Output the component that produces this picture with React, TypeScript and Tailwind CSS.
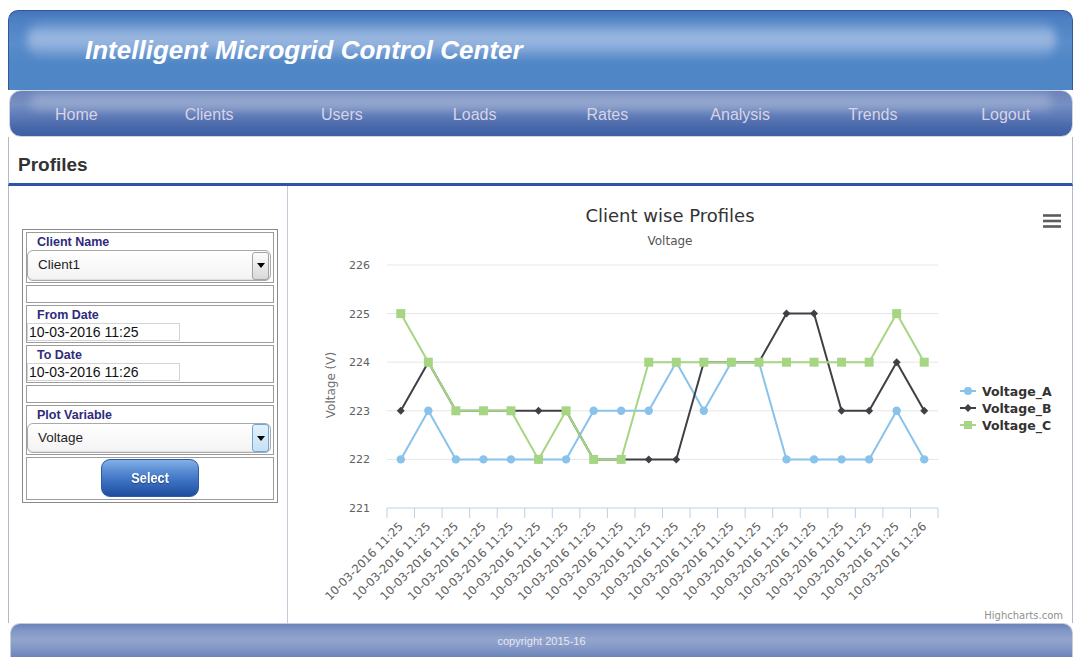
import React from "react";

const A = [222, 223, 222, 222, 222, 222, 222, 223, 223, 223, 224, 223, 224, 224, 222, 222, 222, 222, 223, 222];
const B = [223, 224, 223, 223, 223, 223, 223, 222, 222, 222, 222, 224, 224, 224, 225, 225, 223, 223, 224, 223];
const C = [225, 224, 223, 223, 223, 222, 223, 222, 222, 224, 224, 224, 224, 224, 224, 224, 224, 224, 225, 224];
const labels = [...Array(19).fill("10-03-2016 11:25"), "10-03-2016 11:26"];

const X0 = 387;
const STEP = 27.55;
const px = (i: number) => X0 + STEP * (i + 0.5);
const py = (v: number) => 265 + (226 - v) * 48.6;

const COL_A = "#89c2ea";
const COL_B = "#3f4045";
const COL_C = "#a6d683";

const pts = (d: number[]) => d.map((v, i) => `${px(i)},${py(v)}`).join(" ");

const diamond = (x: number, y: number, r = 4) => `M${x},${y - r} L${x + r},${y} L${x},${y + r} L${x - r},${y} Z`;

const navItems = ["Home", "Clients", "Users", "Loads", "Rates", "Analysis", "Trends", "Logout"];

function Chart() {
  return (
    <svg width={784} height={437} className="block" style={{ fontFamily: '"DejaVu Sans", Verdana, sans-serif' }}>
      <g transform="translate(-288,-186)">
        <text x={670} y={222} textAnchor="middle" fontSize={18} fill="#333333">
          Client wise Profiles
        </text>
        <text x={670} y={245} textAnchor="middle" fontSize={12} fill="#555555">
          Voltage
        </text>

        {/* export menu */}
        <g stroke="#5c5c5c" strokeWidth={2.6}>
          <line x1={1043} x2={1061} y1={215.5} y2={215.5} />
          <line x1={1043} x2={1061} y1={221} y2={221} />
          <line x1={1043} x2={1061} y1={226.5} y2={226.5} />
        </g>

        {/* grid */}
        {[226, 225, 224, 223, 222].map((v) => (
          <line key={v} x1={X0} x2={X0 + STEP * 20} y1={py(v)} y2={py(v)} stroke="#e6e6e6" strokeWidth={1} />
        ))}
        {[226, 225, 224, 223, 222, 221].map((v) => (
          <text key={v} x={370} y={py(v) + 4} textAnchor="end" fontSize={11} fill="#606060">
            {v}
          </text>
        ))}
        <text x={335} y={385} textAnchor="middle" fontSize={12} fill="#707070" transform="rotate(-90 335 385)">
          Voltage (V)
        </text>

        {/* x axis */}
        <line x1={X0} x2={X0 + STEP * 20} y1={508} y2={508} stroke="#c0d0e0" strokeWidth={1} />
        {Array.from({ length: 21 }).map((_, k) => (
          <line key={k} x1={X0 + STEP * k} x2={X0 + STEP * k} y1={508} y2={518} stroke="#c0d0e0" strokeWidth={1} />
        ))}
        {labels.map((l, i) => (
          <text
            key={i}
            x={px(i) + 3}
            y={527}
            textAnchor="end"
            fontSize={11.6}
            fill="#606060"
            transform={`rotate(-45 ${px(i) + 3} 527)`}
          >
            {l}
          </text>
        ))}

        {/* series */}
        <polyline points={pts(A)} fill="none" stroke={COL_A} strokeWidth={2} strokeLinejoin="round" />
        {A.map((v, i) => (
          <circle key={i} cx={px(i)} cy={py(v)} r={4.2} fill={COL_A} />
        ))}
        <polyline points={pts(B)} fill="none" stroke={COL_B} strokeWidth={2} strokeLinejoin="round" />
        {B.map((v, i) => (
          <path key={i} d={diamond(px(i), py(v))} fill={COL_B} />
        ))}
        <polyline points={pts(C)} fill="none" stroke={COL_C} strokeWidth={2} strokeLinejoin="round" />
        {C.map((v, i) => (
          <rect key={i} x={px(i) - 4.5} y={py(v) - 4.5} width={9} height={9} fill={COL_C} />
        ))}

        {/* legend */}
        <g>
          <line x1={960} x2={976} y1={391} y2={391} stroke={COL_A} strokeWidth={2} />
          <circle cx={968} cy={391} r={4} fill={COL_A} />
          <text x={982} y={395.5} fontSize={12.5} fontWeight="bold" fill="#333333">
            Voltage_A
          </text>
          <line x1={960} x2={976} y1={408} y2={408} stroke={COL_B} strokeWidth={2} />
          <path d={diamond(968, 408)} fill={COL_B} />
          <text x={982} y={412.5} fontSize={12.5} fontWeight="bold" fill="#333333">
            Voltage_B
          </text>
          <line x1={960} x2={976} y1={425} y2={425} stroke={COL_C} strokeWidth={2} />
          <rect x={964} y={421} width={8} height={8} fill={COL_C} />
          <text x={982} y={429.5} fontSize={12.5} fontWeight="bold" fill="#333333">
            Voltage_C
          </text>
        </g>

        <text x={1063} y={619} textAnchor="end" fontSize={10} fill="#909090">
          Highcharts.com
        </text>
      </g>
    </svg>
  );
}

function Arrow() {
  return <div className="h-0 w-0 border-l-[4px] border-r-[4px] border-t-[5px] border-l-transparent border-r-transparent border-t-black" />;
}

function SelectBox({ value, focused }: { value: string; focused?: boolean }) {
  return (
    <div className="mr-[2px] flex h-full items-center justify-between rounded-[6px] border border-[#a9a9a9] bg-gradient-to-b from-white to-[#f3f3f3] pl-[10px] pr-[1px] shadow-[inset_0_-1px_1px_rgba(0,0,0,0.08)]">
      <span className="text-[13.5px] text-[#1e1e1e]">{value}</span>
      <div
        className={
          focused
            ? "flex h-[28px] w-[17px] items-center justify-center rounded-[3px] border border-[#6fa6da] bg-gradient-to-b from-[#e3f1fb] to-[#c5e1f4]"
            : "flex h-[28px] w-[17px] items-center justify-center rounded-[3px] border border-[#a3a3a3] bg-gradient-to-b from-[#fdfdfd] to-[#d8d8d8]"
        }
      >
        <Arrow />
      </div>
    </div>
  );
}

function Label({ text }: { text: string }) {
  return <div className="pl-[10px] pt-[1px] text-[12.5px] font-bold leading-[16px] text-[#2f2b7d]">{text}</div>;
}

function DateInput({ value }: { value: string }) {
  return (
    <div className="flex h-[18px] w-[153px] items-center border border-[#d4d4d4] bg-white pl-[1px] text-[14px] leading-none text-[#111111]">
      {value}
    </div>
  );
}

export default function App() {
  return (
    <div
      className="h-[657px] w-[1075px] overflow-hidden bg-white pl-[8px] pr-[2px] pt-[10px]"
      style={{ fontFamily: '"Liberation Sans", Arial, sans-serif' }}
    >
      <div className="flex w-[1065px] flex-col">
        {/* header */}
        <div className="relative flex h-[80px] items-center overflow-hidden rounded-t-[10px] border border-b-0 border-[#33569e] bg-[linear-gradient(to_bottom,#4574ba_0%,#4d80c3_10%,#5a8dcb_40%,#4f86c6_65%,#4f86c6_100%)]">
          <div className="absolute left-[18px] right-[16px] top-[9px] h-[40px] rounded-[20px] bg-[linear-gradient(to_bottom,rgba(156,186,226,0)_0%,#9bb8e0_38%,#97b5df_58%,rgba(156,186,226,0)_100%)] blur-[5px]" />
          <h1 className="relative pl-[76px] text-[26px] font-bold italic text-white">Intelligent Microgrid Control Center</h1>
        </div>

        {/* nav */}
        <div className="relative ml-[1px] grid h-[47px] grid-cols-8 items-center overflow-hidden rounded-[12px] border border-[#cfd3dc] bg-[linear-gradient(to_bottom,#6a83bb_0%,#7189bf_14%,#7690c3_30%,#5f7bb8_55%,#4868aa_80%,#3f5fa4_100%)] pt-[3px]">
          <div className="absolute left-[20px] right-[20px] top-[3px] h-[15px] rounded-full bg-[#93a6cd] blur-[5px]" />
          {navItems.map((n) => (
            <div key={n} className="relative text-center text-[16px] text-[#d9d3e3]">
              {n}
            </div>
          ))}
        </div>

        {/* page title */}
        <div className="h-[49px] border-x border-b-[3px] border-x-[#b3bbcb] border-b-[#2d54a4] pl-[9px] pt-[17px]">
          <div className="text-[19px] font-bold leading-[22px] text-[#333333]">Profiles</div>
        </div>

        {/* content */}
        <div className="flex h-[437px] border-x border-x-[#b3bbcb]">
          <div className="w-[279px] shrink-0 border-r border-r-[#c3cad8] pl-[13px] pt-[43px]">
            <div className="flex w-[256px] flex-col gap-[2px] border border-[#8a8a8a] px-[3px] py-[2px]">
              <div className="flex h-[51px] flex-col border border-[#9c9c9c]">
                <div className="h-[17px]">
                  <Label text="Client Name" />
                </div>
                <div className="h-[31px]">
                  <SelectBox value="Client1" />
                </div>
              </div>
              <div className="h-[18px] border border-[#9c9c9c]" />
              <div className="flex h-[38px] flex-col border border-[#9c9c9c]">
                <div className="h-[17px]">
                  <Label text="From Date" />
                </div>
                <DateInput value="10-03-2016 11:25" />
              </div>
              <div className="flex h-[38px] flex-col border border-[#9c9c9c]">
                <div className="h-[17px]">
                  <Label text="To Date" />
                </div>
                <DateInput value="10-03-2016 11:26" />
              </div>
              <div className="h-[18px] border border-[#9c9c9c]" />
              <div className="flex h-[50px] flex-col border border-[#9c9c9c]">
                <div className="h-[17px]">
                  <Label text="Plot Variable" />
                </div>
                <div className="h-[30px]">
                  <SelectBox value="Voltage" focused />
                </div>
              </div>
              <div className="flex h-[43px] justify-center border border-[#9c9c9c] pt-[1px]">
                <button className="flex h-[38px] w-[98px] items-center justify-center rounded-[9px] border border-[#2a5aa6] bg-[linear-gradient(to_bottom,#82b0e6_0%,#5a8dd3_30%,#3a6fc0_60%,#1f4d9d_100%)] text-white">
                  <span className="inline-block scale-x-[0.85] text-[15px] font-bold [text-shadow:0_1px_1px_rgba(0,0,0,0.35)]">
                    Select
                  </span>
                </button>
              </div>
            </div>
          </div>
          <div className="flex-1 overflow-hidden">
            <Chart />
          </div>
        </div>

        {/* footer */}
        <div className="ml-[2px] flex h-[40px] items-start justify-center rounded-t-[10px] border border-b-0 border-[#c5cbd7] bg-[linear-gradient(to_bottom,#6a82ba_0%,#7f95c4_15%,#93a5cd_40%,#8599c7_60%,#5b76b3_100%)] pt-[9px]">
          <span className="text-[11px] text-[#e8e6f2]">copyright 2015-16</span>
        </div>
      </div>
    </div>
  );
}
